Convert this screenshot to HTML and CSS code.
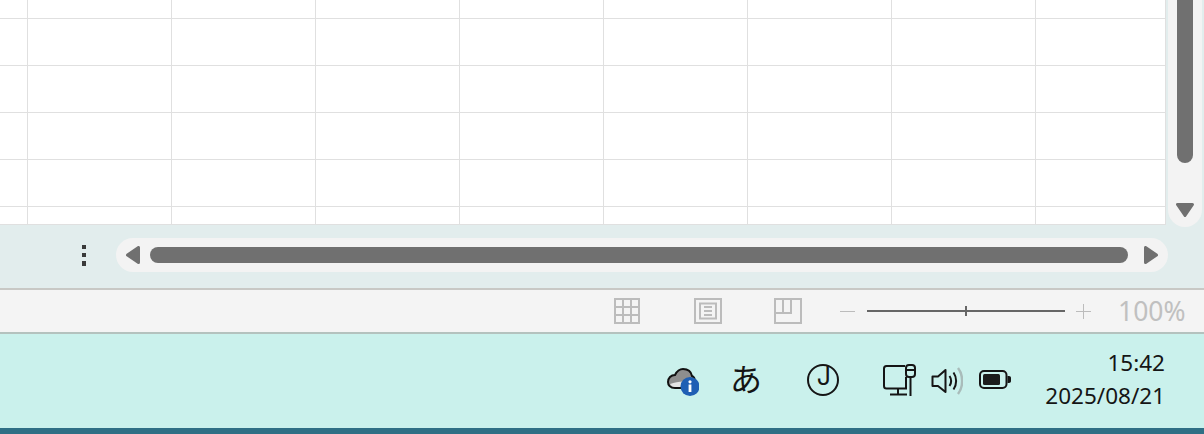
FILE: index.html
```html
<!DOCTYPE html>
<html>
<head>
<meta charset="utf-8" />
<title>Sheet</title>
<link rel="stylesheet" href="styles.css">
</head>
<body>

<div class="work">
	<div class="top">
		<div class="grid"></div>
		<div class="vbar">
			<div class="vthumb"></div>
			<svg class="varrow" width="18" height="14" viewBox="0 0 18 14"><path d="M1.500 1.500H16.500L9 12.500Z" fill="#707070" stroke="#707070" stroke-width="3" stroke-linejoin="round"/></svg>
		</div>
	</div>
	<div class="bottom">
		<div class="dots"><i></i><i></i><i></i></div>
		<div class="hbar">
			<svg width="14" height="18" viewBox="0 0 14 18"><path d="M12.500 1.500V16.500L1.500 9Z" fill="#707070" stroke="#707070" stroke-width="3" stroke-linejoin="round"/></svg>
			<div class="hthumb"></div>
			<svg width="14" height="18" viewBox="0 0 14 18"><path d="M1.500 1.500V16.500L12.500 9Z" fill="#707070" stroke="#707070" stroke-width="3" stroke-linejoin="round"/></svg>
		</div>
	</div>
</div>

<div class="status">
	<div class="views">
		<svg width="28" height="26" viewBox="0 0 28 26" fill="none" stroke="#bcbcbc" stroke-width="2"><path d="M1 1H25V25H1ZM9 1V25M17 1V25M1 9H25M1 17H25"/></svg>
		<svg width="28" height="26" viewBox="0 0 28 26" fill="none" stroke="#bcbcbc" stroke-width="2"><path d="M1 1H27V25H1ZM6 5.500H22V20.500H6ZM10 9H18M10 13H18M10 17H18"/></svg>
		<svg width="28" height="26" viewBox="0 0 28 26" fill="none" stroke="#bcbcbc" stroke-width="2"><path d="M1 1H27V25H1ZM1 15H17V1M9 1V15"/></svg>
	</div>
	<div class="zoom">
		<span class="minus"></span>
		<div class="slider"><span class="tick"></span></div>
		<span class="plus"></span>
		<span class="pct">100%</span>
	</div>
</div>

<div class="taskbar">
	<svg class="t-cloud" width="32" height="28" viewBox="0 0 32 28">
		<path d="M8 20C3 20 1 17 1 14C1 10 4 7 8 7C10 3 13 1 16 1C20 1 24 3 25 8C27 9 28 11 28 14L20 20Z" fill="#8e8e8e" stroke="#111" stroke-width="2"/>
		<path d="M3 16C9 14 15 13 22 14L16 19H8C6 19 4 18 3 16Z" fill="#e4e4e4"/>
		<circle cx="23" cy="18.500" r="9.500" fill="#1f5fb4"/>
		<circle cx="23" cy="13.800" r="1.600" fill="#fff"/>
		<rect x="21.600" y="16.500" width="2.800" height="7.500" fill="#fff"/>
	</svg>
	<span class="t-kana">あ</span>
	<span class="t-j">J</span>
	<svg class="t-net" width="34" height="33" viewBox="0 0 34 33" fill="none" stroke="#151515" stroke-width="2">
		<path d="M22 2H3.500C2 2 1 3 1 4.500V22C1 23.500 2 24.500 3.500 24.500H24M23 13V24.500M15 24.500V30.500M7 30.500H24"/>
		<rect x="23" y="1" width="9" height="12" rx="3"/>
		<path d="M23 6H32M27.500 13V32"/>
	</svg>
	<svg class="t-vol" width="32" height="30" viewBox="0 0 32 30" fill="none" stroke="#151515" stroke-width="2">
		<path d="M1.500 10.500H7L14.500 4V26L7 20H1.500Z" stroke-linejoin="round"/>
		<path d="M18.500 10C20.500 13 20.500 17 18.500 20"/>
		<path d="M22.500 6.500C26 11.500 26 18.500 22.500 23.500"/>
		<path d="M27 2C32.500 9 32.500 21 27 28" stroke="#a9bcba" stroke-width="2.500"/>
	</svg>
	<svg class="t-bat" width="32" height="19" viewBox="0 0 32 19">
		<rect x="1" y="1" width="26.500" height="17" rx="4" fill="none" stroke="#151515" stroke-width="2"/>
		<rect x="4" y="4" width="17" height="11" rx="1.500" fill="#1c1c1c"/>
		<path d="M28.500 6H30C31.200 6 32 6.800 32 8V11C32 12.200 31.200 13 30 13H28.500Z" fill="#151515"/>
	</svg>
	<div class="clock">
		<div>15:42</div>
		<div>2025/08/21</div>
	</div>
</div>
<div class="edge"></div>

</body>
</html>
```

FILE: styles.css
```css
html,body{
	margin:0;
	padding:0;
	overflow:hidden;
}
body{
	width:1204px;
	height:434px;
	font-family:"Noto Sans","Noto Sans CJK JP",sans-serif;
}

.work{
	background:#e2eded;
	height:288px;
}
.top{
	display:flex;
	height:227px;
}
.grid{
	width:1166px;
	height:225px;
	box-sizing:border-box;
	background-color:#fff;
	background-image:
		linear-gradient(to right,#e0e0e0 1px,transparent 1px),
		linear-gradient(to bottom,#e0e0e0 1px,transparent 1px);
	background-size:144px 100%,100% 47px;
	background-position:27px 0,0 18px;
	border-right:1px solid #e0e0e0;
	border-bottom:1px solid #e0e0e0;
}
.vbar{
	width:34px;
	margin-left:2px;
	height:227px;
	box-sizing:border-box;
	padding:0 9px;
	background:#f3f3f3;
	border-radius:0 0 17px 17px;
	display:flex;
	flex-direction:column;
	align-items:center;
}
.vthumb{
	width:16px;
	height:163px;
	flex:none;
	background:#707070;
	border-radius:0 0 8px 8px;
}
.varrow{
	margin-top:40px;
	flex:none;
}
.bottom{
	display:flex;
	align-items:center;
	height:34px;
	margin-top:11px;
}
.dots{
	width:116px;
	box-sizing:border-box;
	padding-left:82px;
	display:flex;
	flex-direction:column;
	gap:4px;
}
.dots i{
	display:block;
	width:4px;
	height:4px;
	background:#3a3a3a;
}
.dots i:last-child{
	height:5px;
}
.hbar{
	width:1052px;
	height:34px;
	box-sizing:border-box;
	padding:0 10px;
	background:#f3f3f3;
	border-radius:17px;
	display:flex;
	align-items:center;
}
.hthumb{
	width:978px;
	height:16px;
	margin:0 16px 0 10px;
	background:#707070;
	border-radius:8px;
}

.status{
	height:42px;
	background:#f4f4f4;
	border-top:2px solid #c8c8c5;
	border-bottom:2px solid #b4c2be;
	display:flex;
	align-items:center;
	padding-left:614px;
}
.views{
	display:flex;
	gap:52px;
	margin-right:38px;
}
.zoom{
	display:flex;
	align-items:center;
}
.minus{
	width:15px;
	height:1px;
	background:#bcbcbc;
}
.slider{
	width:198px;
	height:2px;
	margin:0 11px 0 12px;
	background:#666;
	display:flex;
	justify-content:center;
	align-items:center;
}
.tick{
	width:2px;
	height:10px;
	background:#666;
}
.plus{
	width:15px;
	height:15px;
	background:
		linear-gradient(#bcbcbc,#bcbcbc) center/15px 1px no-repeat,
		linear-gradient(#bcbcbc,#bcbcbc) center/1px 15px no-repeat;
}
.pct{
	margin-left:27px;
	font-size:26.500px;
	line-height:30px;
	color:#c0c0c0;
}

.taskbar{
	height:94px;
	background:#caf1ec;
	display:flex;
	align-items:flex-start;
	padding-left:667px;
	color:#151515;
}
.t-cloud{
	margin-top:34px;
}
.t-kana{
	margin:23px 0 0 31px;
	width:42px;
	font-size:32px;
	line-height:44px;
}
.t-j{
	box-sizing:border-box;
	width:32px;
	height:32px;
	margin:30px 0 0 35px;
	padding-left:2px;
	border:2px solid #151515;
	border-radius:50%;
	font-family:Inter,sans-serif;
	font-size:25px;
	line-height:20px;
	text-align:center;
}
.t-net{
	margin:30px 0 0 44px;
}
.t-vol{
	margin:32px 0 0 14px;
}
.t-bat{
	margin:36px 0 0 16px;
}
.clock{
	margin:12px 0 0 33px;
	width:121px;
	font-size:22.500px;
	line-height:33px;
	text-align:right;
	white-space:nowrap;
}
.edge{
	height:6px;
	background:#2f6f85;
}
```
